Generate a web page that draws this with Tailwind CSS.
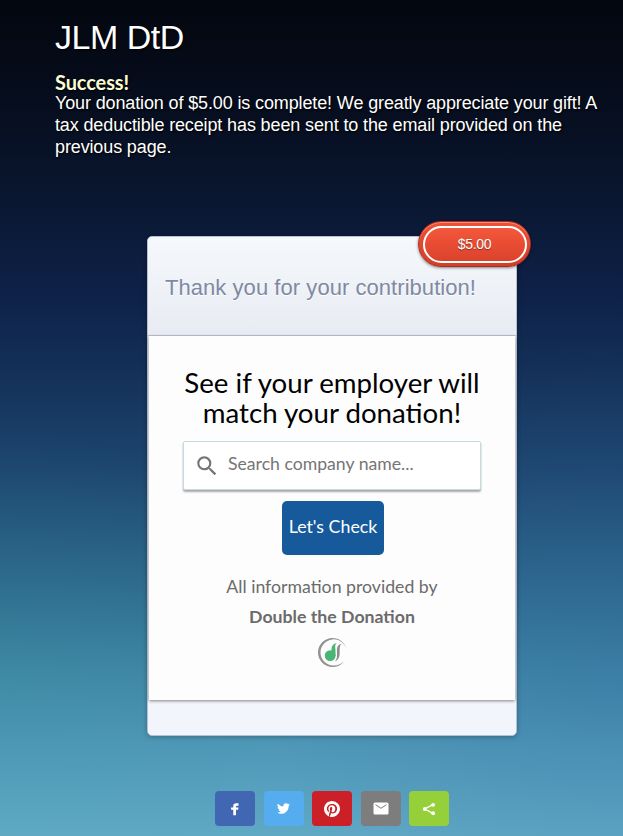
<!DOCTYPE html>
<html lang="en">
<head>
<meta charset="utf-8">
<title>JLM DtD</title>
<script src="https://cdn.jsdelivr.net/npm/@tailwindcss/browser@4"></script>
</head>
<body class="w-[623px] h-[836px] overflow-hidden font-['Liberation_Sans',Arial,sans-serif] bg-[radial-gradient(ellipse_300px_260px_at_0%_82%,#38a0981f_0%,#38a09800_100%),radial-gradient(ellipse_360px_330px_at_100%_80%,#3060a038_0%,#3060a000_100%),linear-gradient(180deg,#03070f_0%,#060d1d_12%,#0a1731_24%,#0e2148_35%,#143159_45%,#1d466f_56%,#2c678b_69%,#3e85a5_80%,#5099b9_90%,#60a9c5_100%)]">
<main class="flex h-full flex-col">
  <header class="h-[236px] pl-[55px] pt-[17px] text-white [text-shadow:1px_1px_2px_#000]">
    <h1 class="text-[34px] leading-[40px] tracking-[-0.5px]">JLM DtD</h1>
    <p class="mt-[14px] text-[20px] leading-[22px] font-bold font-['Lato',sans-serif] tracking-[-0.1px] text-[#fbfbd4]">Success!</p>
    <p class="-mt-px w-[560px] text-[18px] leading-[22px] tracking-[-0.13px] whitespace-nowrap">Your donation of $5.00 is complete! We greatly appreciate your gift! A<br>tax deductible receipt has been sent to the email provided on the<br>previous page.</p>
  </header>

  <section class="relative ml-[147px] flex h-[500px] w-[370px] flex-col rounded-[5px] border border-[#b4bfd2] bg-[#f2f5fb] shadow-[0_1px_5px_#0004]">
    <div class="flex h-[99px] items-center rounded-t-[4px] border-b border-[#bcc5d5] bg-linear-to-b from-[#f5f9fc] to-[#e8ebf2] pl-[17px] pt-[3px]">
      <h2 class="text-[22px] leading-[28px] tracking-[0.05px] text-[#8089a3] whitespace-nowrap [text-shadow:0_1px_0_#fff]">Thank you for your contribution!</h2>
    </div>
    <div class="absolute -top-[16px] left-[270px] flex h-[46px] w-[113px] rounded-full border border-[#a92d1e] bg-linear-to-b from-[#ee5136] to-[#d33e29] p-[4px] pr-[3px] pb-[3px] shadow-[inset_0_1px_0_#ff8b73,0_1px_3px_#0007]">
      <div class="flex flex-1 items-center justify-center rounded-full border-2 border-white bg-linear-to-b from-[#f4573b] to-[#db422c] pb-px pr-px text-[14px] tracking-[-0.3px] text-white [text-shadow:0_1px_1px_#0006]">$5.00</div>
    </div>
    <div class="mx-px flex h-[364px] flex-col items-center bg-[#fdfdfd] pt-[32px] font-['Lato',sans-serif] shadow-[0_1px_3px_#0007]">
      <p class="text-center text-[27.65px] leading-[30px] text-black whitespace-nowrap">See if your employer will<br>match your donation!</p>
      <div class="mt-[13px] flex h-[49px] w-[298px] shrink-0 items-center rounded-[2px] border border-[#c2dce2] bg-white pl-[10px] text-[#757575] shadow-[0_2px_2px_#0005]">
        <svg class="mt-[1px] size-[26px]" viewBox="0 0 24 24" fill="currentColor"><path d="M15.5 14h-.79l-.28-.27A6.47 6.47 0 0 0 16 9.500 6.500 6.500 0 1 0 9.500 16c1.610 0 3.090-.59 4.230-1.570l.27.28v.79l5 4.990L20.490 19l-4.990-5zm-6 0C7.010 14 5 11.990 5 9.500S7.010 5 9.500 5 14 7.010 14 9.500 11.990 14 9.500 14z"/></svg>
        <span class="ml-[8px] -mt-[2px] text-[17.65px]">Search company name...</span>
      </div>
      <button class="mt-[11px] ml-[2px] h-[54px] w-[102px] shrink-0 rounded-[5px] bg-[#165a9c] pb-[3px] text-[17.8px] text-white whitespace-nowrap">Let's Check</button>
      <p class="mt-[17px] text-center text-[17.7px] leading-[30px] text-[#6b6b6b]">All information provided by<br><b>Double the Donation</b></p>
      <svg class="mt-[4px] mr-[1px] h-[32px] w-[32px]" viewBox="0 0 32 32">
        <path d="M30.500 12.200C28 6 23 2 16.500 2C8.500 2 2 8.500 2 16.500S8.500 31 16.500 31C21 31 25 29.200 28 25.500C24.500 28.500 21 29.700 17.500 29.500C10.500 29.200 4.800 24 4.500 17C4.200 10 9.500 4 16.500 3.400C22.500 3 27 6 30.500 12.200Z" fill="#929292"/>
        <circle cx="14.200" cy="19.600" r="5.400" fill="#48b575"/>
        <path d="M15.500 19V13C15.500 9.800 17.600 7.900 20.600 7.100C18.300 9.500 19.500 12 19.500 14.500V20Z" fill="#48b575"/>
        <path d="M18.800 25.500C22 22.500 20.800 17.500 20.900 13.500C21 10.500 22.600 8.700 25.200 7.800C23.200 10.200 23.900 13.500 23.700 17.500C23.500 21.500 22.200 24.300 18.800 25.500Z" fill="#8d8d8d"/>
      </svg>
    </div>
  </section>

  <nav class="ml-[215px] mt-[55px] flex gap-[8.600px]">
    <a class="flex h-[35px] w-[40px] items-center justify-center rounded-[4px] bg-[#4267b2]"><svg class="size-[14px]" viewBox="0 0 32 32" fill="#fff"><path d="M20.500 8.500h3.500V3h-5c-4.800 0-7 2.500-7 6.300v3.200H7v5.100h5V30h6.200V17.600h4.900l.9-5.100h-5.800V10.300c0-1.200.8-1.800 2.300-1.800z"/></svg></a>
    <a class="flex h-[35px] w-[40px] items-center justify-center rounded-[4px] bg-[#55acee]"><svg class="size-[13px]" viewBox="0 0 24 24" fill="#fff"><path d="M23.950 4.570a10 10 0 0 1-2.820.77 4.960 4.960 0 0 0 2.160-2.720 9.900 9.900 0 0 1-3.120 1.180 4.920 4.920 0 0 0-8.380 4.480A13.930 13.930 0 0 1 1.640 3.160a4.920 4.920 0 0 0 1.520 6.570 4.900 4.900 0 0 1-2.230-.61v.06a4.920 4.920 0 0 0 3.950 4.830 5 5 0 0 1-2.210.08 4.940 4.940 0 0 0 4.600 3.420A9.870 9.870 0 0 1 0 19.540a13.990 13.990 0 0 0 7.550 2.210c9.050 0 14-7.500 14-13.980 0-.21 0-.42-.02-.63a9.940 9.940 0 0 0 2.460-2.550z"/></svg></a>
    <a class="flex h-[35px] w-[40px] items-center justify-center rounded-[4px] bg-[#cb2027]"><svg class="size-[16px]" viewBox="0 0 24 24" fill="#fff"><path d="M12 0C5.370 0 0 5.370 0 12c0 5.080 3.160 9.420 7.620 11.160-.1-.95-.2-2.400.04-3.440l1.410-5.960s-.36-.72-.36-1.780c0-1.670.97-2.910 2.170-2.910 1.020 0 1.520.77 1.520 1.690 0 1.030-.66 2.570-1 3.990-.28 1.200.6 2.170 1.780 2.170 2.130 0 3.770-2.250 3.770-5.490 0-2.870-2.060-4.870-5.010-4.870-3.410 0-5.410 2.560-5.410 5.200 0 1.030.39 2.140.89 2.740.1.120.11.220.08.340l-.33 1.360c-.05.220-.17.270-.4.160-1.500-.7-2.430-2.890-2.430-4.650 0-3.780 2.750-7.260 7.920-7.260 4.160 0 7.400 2.970 7.400 6.930 0 4.140-2.610 7.460-6.230 7.460-1.210 0-2.360-.63-2.750-1.380l-.75 2.850c-.27 1.050-1 2.350-1.490 3.150A12 12 0 1 0 12 0z"/></svg></a>
    <a class="flex h-[35px] w-[40px] items-center justify-center rounded-[4px] bg-[#7d7d7d]"><svg class="h-[13px] w-[16px]" viewBox="0 0 16 13"><rect x=".5" y=".5" width="15" height="12" rx="1.500" fill="#fff"/><path d="M2.500 2.700 8 6.300l5.500-3.600" fill="none" stroke="#7d7d7d"/></svg></a>
    <a class="flex h-[35px] w-[40px] items-center justify-center rounded-[4px] bg-[#95d03a]"><svg class="size-[14px]" viewBox="0 0 16 16" fill="#fff"><path d="M12.500 3 3 8l9.500 5" fill="none" stroke="#fff" stroke-width="1.400"/><circle cx="12.700" cy="3.200" r="2.200"/><circle cx="3.200" cy="8" r="2.200"/><circle cx="12.700" cy="12.800" r="2.200"/></svg></a>
  </nav>
</main>
</body>
</html>
